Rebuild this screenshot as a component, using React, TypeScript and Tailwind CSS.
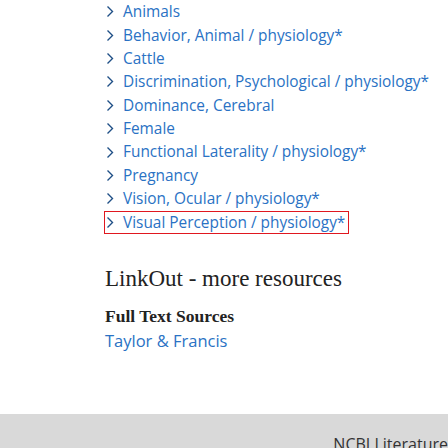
import React from 'react';

const terms = [
  'Animals',
  'Behavior, Animal / physiology*',
  'Cattle',
  'Discrimination, Psychological / physiology*',
  'Dominance, Cerebral',
  'Female',
  'Functional Laterality / physiology*',
  'Pregnancy',
  'Vision, Ocular / physiology*',
  'Visual Perception / physiology*',
];

const Chevron = () => (
  <svg width="8" height="13" viewBox="0 0 8 13" className="shrink-0">
    <path d="M1.5 1.5 L6.5 6.5 L1.5 11.5" fill="none" stroke="#1f4f86" strokeWidth="1.4" />
  </svg>
);

const App: React.FC = () => {
  return (
    <div className="w-[448px] h-[448px] overflow-hidden bg-white flex flex-col">
      <div className="pl-[105px] flex-1">
        <ul className="font-['Open_Sans',sans-serif] text-[15.4px] text-[#2a72c4]">
          {terms.map((t, i) => (
            <li
              key={t}
              className={
                'flex items-center gap-[9px] h-[23.4px] pl-[1px] ' +
                (i === terms.length - 1 ? 'border border-[#e0171f] w-fit pr-[3px] -ml-[1px]' : '')
              }
            >
              <Chevron />
              <span className="whitespace-nowrap">{t}</span>
            </li>
          ))}
        </ul>
        <h2 className="mt-[31px] leading-[28px] font-['Liberation_Serif',serif] text-[23px] text-[#222]">
          LinkOut - more resources
        </h2>
        <h3 className="mt-[12px] leading-[22px] font-['Liberation_Serif',serif] font-bold text-[17.5px] text-[#222]">
          Full Text Sources
        </h3>
        <p className="mt-[3px] leading-[22px] font-['Open_Sans',sans-serif] text-[16.5px] text-[#2a72c4]">Taylor &amp; Francis</p>
      </div>
      <div className="h-[34px] bg-[#d9d9d9] flex justify-end items-end">
        <span className="font-['Open_Sans',sans-serif] text-[16px] text-[#333] leading-none translate-y-[4px] whitespace-nowrap">
          NCBI Literature
        </span>
      </div>
    </div>
  );
};

export default App;
